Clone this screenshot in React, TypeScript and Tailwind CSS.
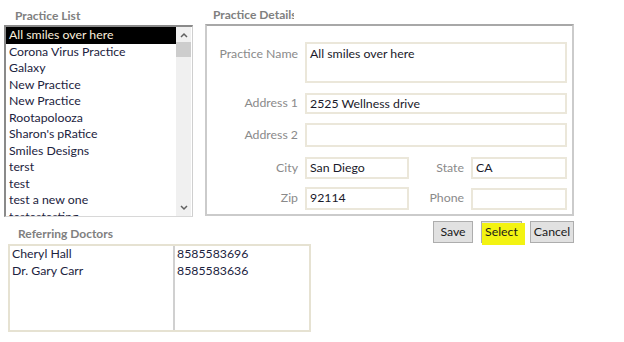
import { useState } from "react";

const practices = [
  "All smiles over here",
  "Corona Virus Practice",
  "Galaxy",
  "New Practice",
  "New Practice",
  "Rootapolooza",
  "Sharon's pRatice",
  "Smiles Designs",
  "terst",
  "test",
  "test a new one",
  "testestesting",
];

const doctors = [
  { name: "Cheryl Hall", phone: "8585583696" },
  { name: "Dr. Gary Carr", phone: "8585583636" },
];

function Field({ value, className }: { value?: string; className: string }) {
  return (
    <div className={`border-2 border-[#ebe7da] bg-white pl-[3px] text-[#1a1a2a] leading-[18px] ${className}`}>
      {value}
    </div>
  );
}

function Label({ text, className = "" }: { text: string; className?: string }) {
  return <div className={`text-right text-[#8a8a8a] ${className}`}>{text}</div>;
}

export default function App() {
  const [selected, setSelected] = useState(0);

  return (
    <div className="w-[624px] h-[342px] bg-white overflow-hidden text-[12.3px] font-['Lato',sans-serif]">
      {/* top row */}
      <div className="flex items-start">
        <div className="ml-[4px] w-[189px]">
          <div className="h-[25px] pl-[11px] pt-[9px] text-[12px] font-bold leading-[14px] text-[#808080]">
            Practice List
          </div>
          <div className="flex h-[192px] border-t-2 border-l-2 border-[#8a8a8a] border-r border-b border-r-[#cfcfcf] border-b-[#d8d8d8] overflow-hidden">
            <div className="flex-1 overflow-hidden">
              {practices.map((p, i) => (
                <div
                  key={i}
                  onClick={() => setSelected(i)}
                  className={`h-[16.5px] leading-[16.5px] pl-[3px] whitespace-nowrap ${
                    i === selected ? "bg-black text-[#fbefdc]" : "text-[#1c2340]"
                  }`}
                >
                  {p}
                </div>
              ))}
            </div>
            <div className="w-[15px] mr-[1px] bg-[#f0f0f0] flex flex-col">
              <div className="h-[15px] flex items-center justify-center">
                <svg width="8" height="6" viewBox="0 0 8 6">
                  <path d="M1 5 L4 2 L7 5" fill="none" stroke="#606060" strokeWidth="1.5" />
                </svg>
              </div>
              <div className="h-[15px] bg-[#cdcdcd]" />
              <div className="flex-1" />
              <div className="h-[16px] flex items-center justify-center">
                <svg width="8" height="6" viewBox="0 0 8 6">
                  <path d="M1 1 L4 4 L7 1" fill="none" stroke="#606060" strokeWidth="1.5" />
                </svg>
              </div>
            </div>
          </div>
        </div>

        <div className="ml-[12px] w-[369px]">
          <div className="h-[24px] pl-[8px] pt-[8px] text-[12px] font-bold leading-[14px] text-[#808080]">
            <div className="w-[81px] overflow-hidden whitespace-nowrap">Practice Details</div>
          </div>
          <div className="h-[192px] border-2 border-[#cbcbcb] border-t-[#a8a8a8] pt-[16px]">
            <div className="flex">
              <Label text="Practice Name" className="w-[91px] pt-[3px]" />
              <Field value="All smiles over here" className="ml-[7px] w-[262px] h-[41px] pt-[1px]" />
            </div>
            <div className="flex items-center mt-[10px]">
              <Label text="Address 1" className="w-[91px]" />
              <Field value="2525 Wellness drive" className="ml-[7px] w-[262px] h-[21px]" />
            </div>
            <div className="flex items-center mt-[9px]">
              <Label text="Address 2" className="w-[91px]" />
              <Field className="ml-[7px] w-[262px] h-[24px]" />
            </div>
            <div className="flex items-center mt-[10px]">
              <Label text="City" className="w-[91px]" />
              <Field value="San Diego" className="ml-[7px] w-[104px] h-[22px]" />
              <Label text="State" className="w-[55px]" />
              <Field value="CA" className="ml-[7px] w-[96px] h-[22px]" />
            </div>
            <div className="flex items-center mt-[8px]">
              <Label text="Zip" className="w-[91px]" />
              <Field value="92114" className="ml-[7px] w-[104px] h-[23px]" />
              <Label text="Phone" className="w-[55px]" />
              <Field className="ml-[7px] w-[96px] h-[22px]" />
            </div>
          </div>
        </div>
      </div>

      {/* bottom row */}
      <div className="flex items-start">
        <div className="ml-[8px] w-[303px]">
          <div className="h-[27px] pl-[10px] pt-[10px] text-[12px] font-bold leading-[14px] text-[#808080]">
            Referring Doctors
          </div>
          <div className="flex h-[88px] border-2 border-[#e6e2d2]">
            <div className="w-[165px] border-r-2 border-[#d0d0d0] pl-[2px]">
              {doctors.map((d) => (
                <div key={d.name} className="h-[16.5px] leading-[16.5px] text-[#1c2340]">
                  {d.name}
                </div>
              ))}
            </div>
            <div className="flex-1 pl-[2px]">
              {doctors.map((d) => (
                <div key={d.phone} className="h-[16.5px] leading-[16.5px] text-[#1c2340]">
                  {d.phone}
                </div>
              ))}
            </div>
          </div>
        </div>

        <div className="ml-[122px] mt-[4px] flex gap-[8px]">
          <button className="w-[40px] h-[22px] bg-[#e1e1e1] border border-[#adadad] text-[#1a1a1a]">
            Save
          </button>
          <button className="relative w-[41px] h-[22px] bg-[#e1e1e1] border border-[#adadad] text-[#1a1a1a]">
            <span className="absolute left-[0px] right-[-4px] top-[1px] bottom-[-3px] bg-[#f3f312]" />
            <span className="relative">Select</span>
          </button>
          <button className="w-[44px] h-[22px] bg-[#e1e1e1] border border-[#adadad] text-[#1a1a1a]">
            Cancel
          </button>
        </div>
      </div>
    </div>
  );
}
